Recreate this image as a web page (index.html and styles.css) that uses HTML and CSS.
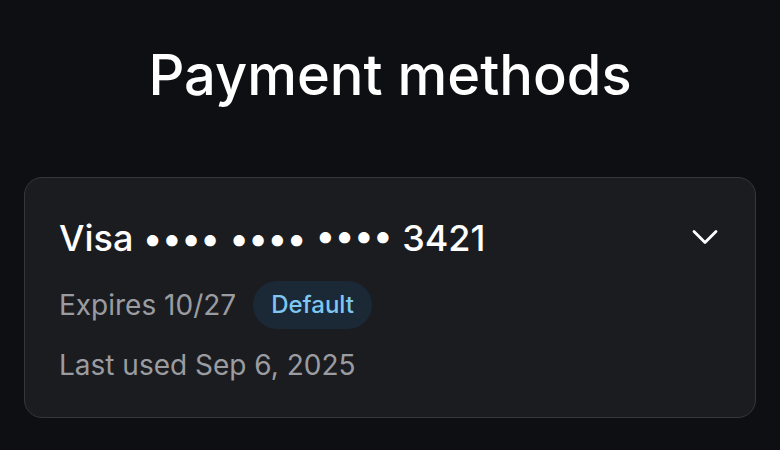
FILE: index.html
```html
<!DOCTYPE html>
<html>
<head>
<meta charset="utf-8">
<link rel="stylesheet" href="styles.css">
</head>
<body>
<main class="page">
  <h1 class="title">Payment methods</h1>
  <section class="card">
    <div class="card-head">
      <div class="card-name">Visa •••• •••• •••• 3421</div>
      <svg class="chevron" width="26" height="16" viewBox="0 0 26 16" fill="none" stroke="#ffffff" stroke-width="2.8" stroke-linecap="round" stroke-linejoin="round"><path d="M2 2.5l11 11 11-11"/></svg>
    </div>
    <div class="meta-row">
      <span class="meta">Expires 10/27</span>
      <span class="badge">Default</span>
    </div>
    <div class="meta last">Last used Sep 6, 2025</div>
  </section>
</main>
</body>
</html>
```
FILE: styles.css
```css
html, body {
  margin: 0;
  padding: 0;
  background: #0e0f13;
}
body {
  font-family: Inter, "Noto Sans", sans-serif;
  color: #ffffff;
}
.page {
  padding: 40px 24px 0 24px;
}
.title {
  margin: 0;
  text-align: center;
  font-size: 56px;
  font-weight: 500;
  line-height: 70px;
  letter-spacing: 0;
}
.card {
  margin-top: 67px;
  background: #1b1c20;
  border: 1.5px solid #36373c;
  border-radius: 18px;
  padding: 34px 34px 34px 34px;
}
.card-head {
  display: flex;
  align-items: center;
  justify-content: space-between;
}
.card-name {
  font-size: 36px;
  font-weight: 500;
  line-height: 52px;
}
.chevron {
  margin-right: 3px;
  margin-top: -2px;
}
.meta-row {
  display: flex;
  align-items: center;
  gap: 17px;
  margin-top: 17px;
}
.meta {
  font-size: 28px;
  color: #9b9ca1;
  line-height: 36px;
}
.badge {
  background: #1b2836;
  color: #7dc7f2;
  font-size: 24px;
  font-weight: 500;
  line-height: 48px;
  padding: 0 18px;
  border-radius: 24px;
}
.last {
  display: block;
  margin-top: 18px;
}
```
